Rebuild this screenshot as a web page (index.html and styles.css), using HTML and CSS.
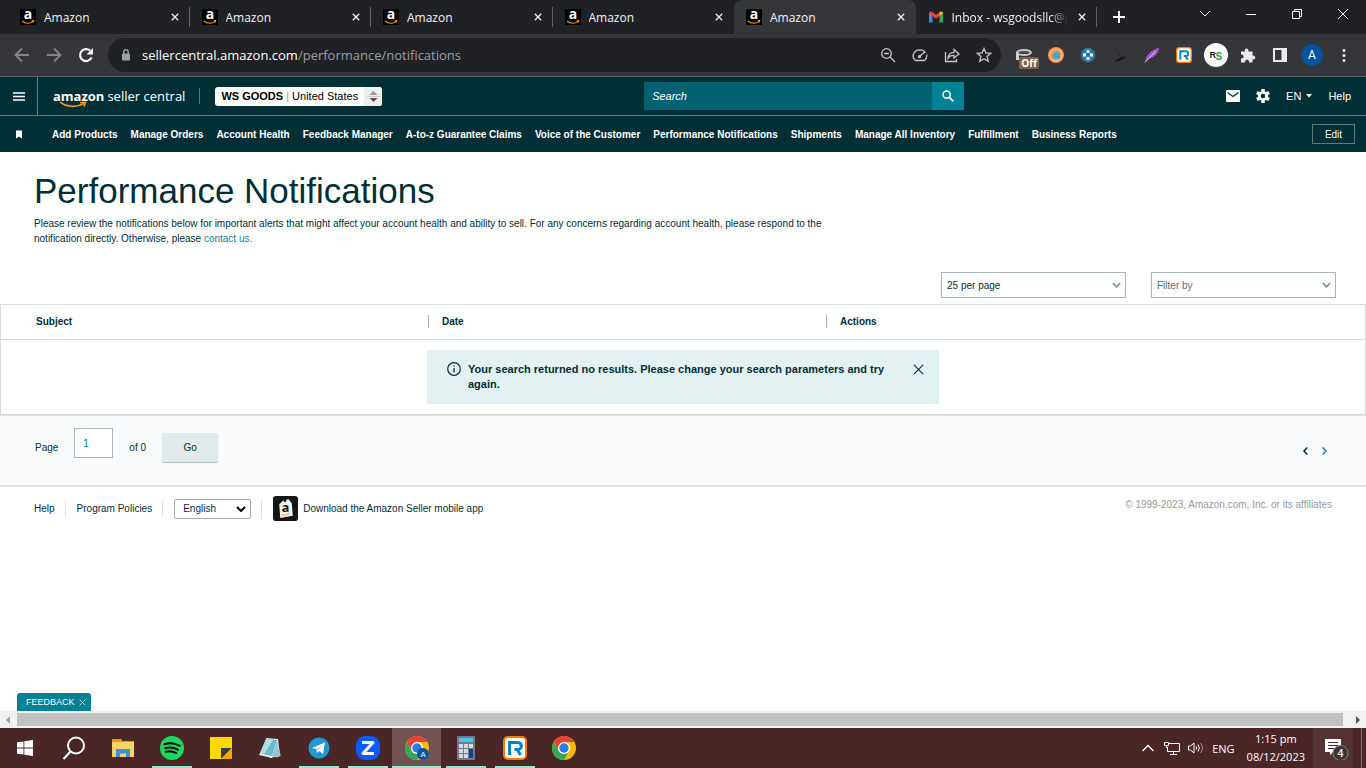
FILE: index.html
```html
<!DOCTYPE html>
<html lang="en">
<head>
<meta charset="UTF-8" />
<meta name="viewport" content="width=device-width, initial-scale=1" />
<title>Amazon</title>
<link rel="stylesheet" href="styles.css">
</head>
<body>

<!-- shared icons -->
<svg class="sprite" aria-hidden="true">
  <symbol id="i-amazon" viewBox="0 0 16 16">
    <rect width="16" height="16" fill="#000"/>
    <text x="8" y="10" text-anchor="middle" font-family="Open Sans, sans-serif" font-weight="700" font-size="14" fill="#fff">a</text>
    <path d="M2 12c3.5 2.800 8 2.800 11 .4M11.600 12l2-.4-.3 1.800" fill="none" stroke="#f90" stroke-width="1.2"/>
  </symbol>
  <symbol id="i-close" viewBox="0 0 10 10">
    <path d="M1 1l8 8M9 1l-8 8" fill="none" stroke="currentColor" stroke-width="1.6"/>
  </symbol>
  <symbol id="i-thin-close" viewBox="0 0 12 12">
    <path d="M1 1l10 10M11 1L1 11" fill="none" stroke="currentColor" stroke-width="1.2"/>
  </symbol>
  <symbol id="i-down" viewBox="0 0 10 6">
    <path d="M1 1l4 4 4-4" fill="none" stroke="currentColor" stroke-width="2"/>
  </symbol>
  <symbol id="i-r" viewBox="0 0 24 24">
    <rect width="24" height="24" rx="5" fill="#ff7a00"/>
    <rect x="2" y="2" width="20" height="20" rx="3" fill="#fff"/>
    <path d="M6.500 19V6.500h8c5 0 5 7 .5 7h-3.500M14 13l3.500 6" fill="none" stroke="#0684bd" stroke-width="3"/>
  </symbol>
  <symbol id="i-chrome" viewBox="0 0 24 24">
    <circle cx="12" cy="12" r="12" fill="#fbbc05"/>
    <path d="M12 6h10.400A12 12 0 0 0 1.600 6L7 15z" fill="#ea4335"/>
    <path d="M1.600 6A12 12 0 0 0 12 24l5-9H7z" fill="#34a853"/>
    <circle cx="12" cy="12" r="6" fill="#fff"/>
    <circle cx="12" cy="12" r="4.700" fill="#3478e5"/>
  </symbol>
</svg>

<!-- browser tabs -->
<div class="tabstrip">
  <div class="tabs">
    <div class="tab"><svg class="favicon"><use href="#i-amazon"/></svg><span class="tab-title">Amazon</span><button class="tab-close" aria-label="Close tab"><svg><use href="#i-close"/></svg></button></div>
    <div class="tab"><svg class="favicon"><use href="#i-amazon"/></svg><span class="tab-title">Amazon</span><button class="tab-close" aria-label="Close tab"><svg><use href="#i-close"/></svg></button></div>
    <div class="tab"><svg class="favicon"><use href="#i-amazon"/></svg><span class="tab-title">Amazon</span><button class="tab-close" aria-label="Close tab"><svg><use href="#i-close"/></svg></button></div>
    <div class="tab before-active"><svg class="favicon"><use href="#i-amazon"/></svg><span class="tab-title">Amazon</span><button class="tab-close" aria-label="Close tab"><svg><use href="#i-close"/></svg></button></div>
    <div class="tab active"><svg class="favicon"><use href="#i-amazon"/></svg><span class="tab-title">Amazon</span><button class="tab-close" aria-label="Close tab"><svg><use href="#i-close"/></svg></button></div>
    <div class="tab"><svg class="favicon" viewBox="0 0 16 16"><path d="M1 13.500V4l3.500 2.500v7z" fill="#4285f4"/><path d="M11.500 6.500L15 4v9.500h-3.500z" fill="#34a853"/><path d="M1 4.500C1 2.600 3 2 4.300 3L8 5.800 11.700 3v4L8 9.800 1 4.600z" fill="#ea4335"/><path d="M11.500 3.100C13 2 15 2.600 15 4.500L11.500 7z" fill="#fbbc04"/></svg><span class="tab-title fade">Inbox - wsgoodsllc@g</span><button class="tab-close" aria-label="Close tab"><svg><use href="#i-close"/></svg></button></div>
  </div>
  <button class="new-tab" aria-label="New tab"><svg viewBox="0 0 12 12"><path d="M6 0v12M0 6h12" stroke="#fff" stroke-width="2"/></svg></button>
  <div class="window-buttons">
    <button aria-label="Search tabs"><svg viewBox="0 0 12 12"><path d="M1 3l5 5 5-5" fill="none" stroke="#fff"/></svg></button>
    <button aria-label="Minimize"><svg viewBox="0 0 12 12"><path d="M1 6.500h10" stroke="#fff"/></svg></button>
    <button aria-label="Restore"><svg viewBox="0 0 12 12"><path d="M1.500 3.500h7v7h-7zM3.500 3.500v-2h7v7h-2" fill="none" stroke="#fff"/></svg></button>
    <button aria-label="Close"><svg viewBox="0 0 12 12"><path d="M1 1l10 10M11 1L1 11" fill="none" stroke="#fff"/></svg></button>
  </div>
</div>

<!-- browser toolbar -->
<div class="toolbar">
  <div class="nav-buttons">
    <button aria-label="Back" class="dim"><svg viewBox="0 0 16 16"><path d="M15 8H2M8 1.500L1.500 8 8 14.500" fill="none" stroke="currentColor" stroke-width="1.8"/></svg></button>
    <button aria-label="Forward" class="dim"><svg viewBox="0 0 16 16"><path d="M1 8h13M8 1.500L14.500 8 8 14.500" fill="none" stroke="currentColor" stroke-width="1.8"/></svg></button>
    <button aria-label="Reload"><svg viewBox="0 0 16 16"><path d="M13.600 10.500A6 6 0 1 1 12.300 3.800" fill="none" stroke="currentColor" stroke-width="2.2"/><path d="M15 1v6.500H8.500z" fill="currentColor"/></svg></button>
  </div>
  <div class="omnibox">
    <svg class="lock" viewBox="0 0 10 12"><rect x="1" y="4.500" width="8" height="7" rx="1" fill="#9aa0a6"/><path d="M2.800 5V3a2.200 2.200 0 0 1 4.400 0v2" fill="none" stroke="#9aa0a6" stroke-width="1.4"/></svg>
    <span class="url"><b>sellercentral.amazon.com</b>/performance/notifications</span>
    <button aria-label="Zoom"><svg viewBox="0 0 16 16"><circle cx="6.500" cy="6.500" r="4.800"/><path d="M10 10l5 5M4.200 6.500h4.600"/></svg></button>
    <button aria-label="Performance"><svg viewBox="0 0 16 16"><path d="M3.500 13.500C-1 10.500 1 3 8 2.800c3 0 4.500 1.200 5.500 2.700M14.800 7.500c.3 2.500-.8 4.800-2.300 6h-9"/><path d="M7 9.800l6-5"/><circle cx="7.500" cy="9.600" r="1"/></svg></button>
    <button aria-label="Share"><svg viewBox="0 0 16 16"><path d="M1.500 5v9.500h11V12"/><path d="M4 11c.5-4 2.500-5.600 6-5.700V2.500L15 7l-5 4V8.300C7.500 8.200 5.500 9 4 11z"/></svg></button>
    <button aria-label="Bookmark"><svg viewBox="0 0 16 16"><path d="M8 1.500l1.900 4.400 4.800.4-3.600 3.200 1.100 4.800L8 11.800l-4.200 2.500 1.100-4.800L1.300 6.300l4.800-.4z"/></svg></button>
  </div>
  <div class="extensions">
    <button aria-label="Extension off"><svg class="big" viewBox="0 0 24 24"><path d="M5.500 9v8" stroke="#d6d6d6" stroke-width="3"/><ellipse cx="12" cy="9.500" rx="8" ry="3.500" fill="#c7c8ca"/><ellipse cx="12" cy="9.500" rx="5.500" ry="1.500" fill="#444"/></svg><span class="off">Off</span></button>
    <button aria-label="Extension"><svg viewBox="0 0 16 16"><circle cx="8" cy="8" r="8" fill="#fb9148"/><circle cx="8" cy="8" r="6" fill="none" stroke="#ffd0a5"/><circle cx="8.500" cy="8.500" r="3.600" fill="#2baee8"/></svg></button>
    <button aria-label="Extension"><svg viewBox="0 0 16 16"><circle cx="8" cy="8" r="7.200" fill="#2476ab"/><path d="M6.500 3h3v3h-3zM6.500 10h3v3h-3zM3 6.500h3v3H3zM10 6.500h3v3h-3z" fill="#fff"/></svg></button>
    <button aria-label="Extension"><svg viewBox="0 0 16 16"><path d="M4 2l5 9" stroke="#232427"/><path d="M4 14l9-4" stroke="#111" stroke-width="1.5"/></svg></button>
    <button aria-label="Extension"><svg viewBox="0 0 16 16"><path d="M1 15C2 7 8 3 15 .5c.5 4-3 9.500-11 11.500z" fill="#a254d8"/><path d="M1 15.500L12 4" stroke="#e6c8f5"/></svg></button>
    <button aria-label="Extension"><svg><use href="#i-r"/></svg></button>
    <button aria-label="Extension"><svg class="big" viewBox="0 0 24 24"><circle cx="12" cy="12" r="12" fill="#fff"/><text x="5.500" y="14.500" font-family="Liberation Sans" font-weight="700" font-size="9" fill="#222">R</text><text x="11.500" y="17" font-family="Liberation Sans" font-weight="700" font-size="10" fill="#16a34a">S</text></svg></button>
    <button aria-label="Extensions"><svg viewBox="0 0 16 16"><path d="M1 4.500h4C4 .5 9 .5 8.500 4.500h4v4c3.800-.5 3.800 4.500 0 4v3H9c.3-4-4.300-4-4 0H1v-4c3.500.3 3.500-4.300 0-4z" fill="#e8eaed"/></svg></button>
    <button aria-label="Side panel"><svg viewBox="0 0 16 16"><path d="M2 2h12v12H2z" fill="none" stroke="#e8eaed" stroke-width="2"/><path d="M9.500 2H14v12H9.500z" fill="#e8eaed"/></svg></button>
    <button aria-label="Profile"><span class="avatar">A</span></button>
    <button aria-label="Menu"><svg viewBox="0 0 16 16"><g fill="#e8eaed"><circle cx="8" cy="3.500" r="1.500"/><circle cx="8" cy="8.500" r="1.500"/><circle cx="8" cy="13.500" r="1.500"/></g></svg></button>
  </div>
</div>

<!-- seller central header -->
<header class="header">
  <button class="menu" aria-label="Menu"><svg viewBox="0 0 12 9"><path d="M0 1h12M0 4.500h12M0 8h12" stroke="#fff" stroke-width="1.5"/></svg></button>
  <a class="logo" href="#"><span class="logo-amazon">amazon<svg viewBox="0 0 28 7"><path d="M1 1c7 5.500 17 5.500 24 1.500M21 1.500h5.500L25 5.500" fill="none" stroke="#f7981d" stroke-width="1.6"/></svg></span><span>seller central</span></a>
  <button class="account"><span class="store"><b>WS GOODS</b> <i>|</i> United States</span><span class="stepper"><svg viewBox="0 0 13 13"><path d="M2.500 5l4-4 4 4z" fill="#999"/><path d="M0 6.500h13" stroke="#ccc"/><path d="M2.500 8l4 4 4-4z" fill="#555"/></svg></span></button>
  <form class="search">
    <input type="search" placeholder="Search" aria-label="Search">
    <button aria-label="Search"><svg viewBox="0 0 12 12"><circle cx="4.600" cy="4.600" r="3.600" fill="none" stroke="#fff" stroke-width="1.5"/><path d="M7.200 7.200l4.200 4.200" stroke="#fff" stroke-width="1.8"/></svg></button>
  </form>
  <div class="header-links">
    <a href="#" aria-label="Messages"><svg viewBox="0 0 14 14"><rect y="1" width="14" height="12" rx="1" fill="#fff"/><path d="M1.500 3.500L7 7.500l5.500-4" fill="none" stroke="#002f36" stroke-width="1.3"/></svg></a>
    <a href="#" aria-label="Settings"><svg viewBox="0 0 14 14"><circle cx="7" cy="7" r="5" fill="#fff"/><path d="M7 0v14M.9 3.500l12.200 7M.9 10.500l12.200-7" stroke="#fff" stroke-width="3.5"/><circle cx="7" cy="7" r="2.300" fill="#002f36"/></svg></a>
    <button class="lang">EN<svg viewBox="0 0 6 4"><path d="M0 0h6L3 3.500z" fill="#fff"/></svg></button>
    <a href="#">Help</a>
  </div>
</header>

<nav class="shortcuts">
  <svg class="bookmark" viewBox="0 0 6 8"><path d="M0 0h6v8L3 6 0 8z" fill="#fff"/></svg>
  <a href="#">Add Products</a>
  <a href="#">Manage Orders</a>
  <a href="#">Account Health</a>
  <a href="#">Feedback Manager</a>
  <a href="#">A-to-z Guarantee Claims</a>
  <a href="#">Voice of the Customer</a>
  <a href="#">Performance Notifications</a>
  <a href="#">Shipments</a>
  <a href="#">Manage All Inventory</a>
  <a href="#">Fulfillment</a>
  <a href="#">Business Reports</a>
  <button class="edit">Edit</button>
</nav>

<main class="page">
  <section class="intro">
    <h1>Performance Notifications</h1>
    <p>Please review the notifications below for important alerts that might affect your account health and ability to sell. For any concerns regarding account health, please respond to the notification directly. Otherwise, please <a href="#">contact us.</a></p>
  </section>

  <div class="filters">
    <label class="dropdown"><select aria-label="Results per page"><option>25 per page</option></select><svg><use href="#i-down"/></svg></label>
    <label class="dropdown muted"><select aria-label="Filter by"><option>Filter by</option></select><svg><use href="#i-down"/></svg></label>
  </div>

  <table class="results">
    <thead>
      <tr><th class="subject">Subject</th><th class="date"><span>Date</span></th><th><span>Actions</span></th></tr>
    </thead>
    <tbody>
      <tr><td colspan="3">
        <div class="alert" role="status">
          <svg class="info" viewBox="0 0 14 14"><circle cx="7" cy="7" r="6.300" fill="none" stroke="#002f36" stroke-width="1.2"/><path d="M7 6v4.500M7 3.500v1.300" stroke="#002f36" stroke-width="1.3"/></svg>
          <p>Your search returned no results. Please change your search parameters and try again.</p>
          <button aria-label="Dismiss"><svg><use href="#i-thin-close"/></svg></button>
        </div>
      </td></tr>
    </tbody>
  </table>

  <div class="pagination">
    <label for="page-number">Page</label>
    <input id="page-number" type="text" value="1">
    <span>of 0</span>
    <button class="go">Go</button>
    <div class="arrows">
      <button aria-label="Previous page"><svg viewBox="0 0 5 8"><path d="M4.300.5L1 4l3.300 3.500" fill="none" stroke="#002f36" stroke-width="1.5"/></svg></button>
      <button aria-label="Next page"><svg viewBox="0 0 5 8"><path d="M.7.5L4 4 .7 7.500" fill="none" stroke="#1a7f9c" stroke-width="1.5"/></svg></button>
    </div>
  </div>

  <footer class="footer">
    <a href="#">Help</a>
    <a href="#">Program Policies</a>
    <div class="language"><label class="dropdown"><select aria-label="Language"><option>English</option></select><svg><use href="#i-down"/></svg></label></div>
    <a class="app" href="#"><svg viewBox="0 0 24 24"><rect width="24" height="24" rx="3" fill="#151515"/><path d="M6 8l4-4 5-1 3 4 1 12-12 2z" fill="#f3f3f3"/><circle cx="11.500" cy="4.500" r="1.300" fill="#151515"/><text x="12" y="15.500" text-anchor="middle" font-family="Open Sans, sans-serif" font-weight="700" font-size="12" fill="#111">a</text><path d="M8.500 17.500c2 1.300 5 1 7.500-.8" fill="none" stroke="#f5a33a"/></svg>Download the Amazon Seller mobile app</a>
    <small>© 1999-2023, Amazon.com, Inc. or its affiliates</small>
  </footer>

  <button class="feedback">FEEDBACK<svg><use href="#i-thin-close"/></svg></button>
</main>

<div class="scrollbar">
  <svg viewBox="0 0 4 8"><path d="M4 0v8L0 4z" fill="#a3a3a3"/></svg>
  <div class="thumb"></div>
  <svg viewBox="0 0 4 8"><path d="M0 0v8l4-4z" fill="#505050"/></svg>
</div>

<!-- windows taskbar -->
<div class="taskbar">
  <button aria-label="Start"><svg class="small" viewBox="0 0 16 16"><path d="M0 2.300l6.500-.9v6.200H0zM7.300 1.300L16 0v7.600H7.300zM0 8.400h6.500v6.200L0 13.700zM7.300 8.400H16V16l-8.700-1.300z" fill="#fff"/></svg></button>
  <button aria-label="Search"><svg viewBox="0 0 24 24"><circle cx="14" cy="9.500" r="8" fill="none" stroke="#fff" stroke-width="2"/><path d="M8.500 15.500L1.500 23" stroke="#fff" stroke-width="2.2"/></svg></button>
  <button aria-label="File Explorer"><svg viewBox="0 0 24 24"><path d="M1 3h9l1.500 2H23v16H1z" fill="#e19b10"/><path d="M1 6h22v15H1z" fill="#fdd264"/><path d="M5 13h14v8h-4v-3.500H9V21H5z" fill="#3b8ee0"/></svg></button>
  <button aria-label="Spotify" class="open"><svg viewBox="0 0 24 24"><circle cx="12" cy="12" r="12" fill="#1ed760"/><path d="M4.500 8.200c5-1.500 10.500-1 15 1.500M5.200 12.200c4.200-1.300 8.800-.7 12.500 1.500M5.800 15.800c3.700-1 7.200-.6 10.300 1.200" fill="none" stroke="#000" stroke-width="2" stroke-linecap="round"/></svg></button>
  <button aria-label="Sticky Notes"><svg viewBox="0 0 24 24"><path d="M1 1h22v22H1z" fill="#ffd800"/><path d="M12 23V12h11z" fill="#3a3a3a"/><path d="M12 23l11-11v11z" fill="#f0ad00"/></svg></button>
  <button aria-label="Notepad"><svg viewBox="0 0 24 24"><path d="M19 4l4 16-5 2z" fill="#a77b36"/><path d="M8 2l12 1 2 17-10 2z" fill="#e0eef2"/><path d="M8 3l11 1-5 16L2 17z" fill="#69b9cf"/><path d="M8 3l7 1-9 14-4-1z" fill="#b3dce6"/><path d="M2 17l12 3v2L1 19z" fill="#eee"/><path d="M19 4l3 16-8 1z" fill="#8fcadb"/></svg></button>
  <button aria-label="Telegram" class="open"><svg viewBox="0 0 24 24"><circle cx="12" cy="12" r="10.500" fill="#1d9ad6"/><path d="M5 12l13-5.500-2 11.500-4-3-2 2-.7-4z" fill="#fff"/><path d="M9.500 13.500L16 8.500l-5.500 6z" fill="#9bc7df"/></svg></button>
  <button aria-label="Zoom" class="open"><svg viewBox="0 0 24 24"><rect width="24" height="24" rx="9" fill="#0b5cff"/><path d="M6 6.500h11L7 17.500h11" fill="none" stroke="#fff" stroke-width="3" stroke-linejoin="round"/></svg></button>
  <button aria-label="Chrome" class="open current"><svg viewBox="0 0 24 24"><use href="#i-chrome" width="24" height="24"/><circle cx="18" cy="18" r="6" fill="#0b569c"/><text x="18" y="21" text-anchor="middle" font-family="Roboto, sans-serif" font-size="8" fill="#fff">A</text></svg></button>
  <button aria-label="Calculator" class="open"><svg viewBox="0 0 24 24"><rect x="3" width="18" height="24" rx="1" fill="#737b87"/><path d="M5 2h14v4H5z" fill="#43c9f2"/><path d="M5 8h4v4H5zM10 8h4v4h-4zM15 8h4v4h-4zM5 13h4v4H5zM10 13h4v4h-4zM5 18h4v4H5zM10 18h4v4h-4z" fill="#d4dae1"/><path d="M15 13h4v9h-4z" fill="#143f87"/></svg></button>
  <button aria-label="RingCentral" class="open"><svg><use href="#i-r"/></svg></button>
  <button aria-label="Chrome"><svg><use href="#i-chrome"/></svg></button>

  <div class="tray">
    <svg viewBox="0 0 16 16"><path d="M2.500 11L8 5.500l5.500 5.500" fill="none" stroke="#fff" stroke-width="1.3"/></svg>
    <svg viewBox="0 0 16 16"><path d="M5 3.500h10.500v8H3.500V7M9.500 11.500v3M6 14.500h7M.5 2.500h4v3h-4zM2.500 5.500v2h1" fill="none" stroke="#fff"/></svg>
    <svg viewBox="0 0 16 16"><path d="M.5 6h2L6 3v10L2.500 10h-2zM8 6.300q1.300 1.700 0 3.400M10 4.500q2.600 3.500 0 7" fill="none" stroke="#fff"/><path d="M12.500 3q4 5 0 10" fill="none" stroke="#a58e8e"/></svg>
    <span>ENG</span>
    <div class="clock"><span>1:15 pm</span><span>08/12/2023</span></div>
    <button class="notices" aria-label="4 notifications"><svg viewBox="0 0 24 24"><path d="M0 3h16v13H8l-3 3v-3H0z" fill="#fff"/><path d="M3 6.500h10M3 9.500h10M3 12.500h6" stroke="#4b2627"/><circle cx="15.500" cy="17" r="7.500" fill="#3b3435" stroke="#8c8081"/><text x="15.500" y="21" text-anchor="middle" font-family="Open Sans, sans-serif" font-weight="600" font-size="11" fill="#fff">4</text></svg></button>
  </div>
</div>

</body>
</html>
```
FILE: styles.css
```css
* {
  box-sizing: border-box;
}

body {
  margin: 0;
  min-height: 100vh;
  display: flex;
  flex-direction: column;
  background: #fff;
  color: #002f36;
  font-family: "Liberation Sans", Arial, sans-serif;
  font-size: 10px;
}

a {
  color: inherit;
  text-decoration: none;
}

button {
  padding: 0;
  border: 0;
  background: none;
  color: inherit;
  font: inherit;
}

svg {
  display: block;
  flex: none;
}

.sprite {
  position: absolute;
  width: 0;
  height: 0;
}

/* Tabs */
.tabstrip {
  display: flex;
  height: 34px;
  padding-left: 8px;
  background: #202124;
  color: #f1f3f4;
  font-family: "Open Sans", sans-serif;
  font-size: 12px;
}

.tabs {
  display: flex;
  flex: 0 1 1089px;
}

.tab {
  display: flex;
  flex: 1;
  min-width: 0;
  align-items: center;
  padding: 0 11px 0 12px;
  background: linear-gradient(#5f6368, #5f6368) right center / 1px 20px no-repeat;
}

.tab.before-active {
  background: none;
}

.tab.active {
  background: #35363a;
  border-radius: 8px 8px 0 0;
}

.favicon {
  width: 16px;
  height: 16px;
  margin-right: 8px;
}

.tab-title {
  flex: 1;
  overflow: hidden;
  white-space: nowrap;
}

.tab-title.fade {
  margin-right: 10px;
  -webkit-mask-image: linear-gradient(90deg, #000 85%, transparent);
  mask-image: linear-gradient(90deg, #000 85%, transparent);
}

.tab-close svg {
  width: 8px;
  height: 8px;
}

.new-tab {
  width: 44px;
  display: grid;
  place-items: center;
}

.new-tab svg,
.window-buttons svg {
  width: 12px;
  height: 12px;
}

.window-buttons {
  display: flex;
  margin-left: auto;
  height: 28px;
}

.window-buttons button {
  width: 46px;
  display: grid;
  place-items: center;
}

/* Address bar */
.toolbar {
  display: flex;
  align-items: center;
  height: 43px;
  padding-left: 6px;
  background: #35363a;
  border-bottom: 1px solid #5f6368;
  color: #f1f3f4;
}

.nav-buttons,
.extensions {
  display: flex;
}

.toolbar button {
  position: relative;
  display: grid;
  place-items: center;
  width: 32px;
  height: 34px;
}

.toolbar svg {
  width: 16px;
  height: 16px;
}

.toolbar .dim {
  color: #85878a;
}

.omnibox {
  display: flex;
  flex: 1;
  align-items: center;
  height: 34px;
  margin: 0 7px 0 6px;
  padding: 0 1px 0 13px;
  border-radius: 17px;
  background: #202124;
  font-family: "Open Sans", sans-serif;
  font-size: 13px;
}

.omnibox button svg {
  fill: none;
  stroke: #c4c7ca;
  stroke-width: 1.3;
}

.toolbar .lock {
  width: 10px;
  height: 12px;
  margin-right: 11px;
}

.url {
  flex: 1;
  color: #9aa0a6;
}

.url b {
  color: #fff;
  font-weight: 400;
}

.toolbar .big {
  width: 24px;
  height: 24px;
}

.extensions {
  padding-right: 6px;
}

.off {
  position: absolute;
  right: 1px;
  bottom: 3px;
  padding: 0 2px;
  border-radius: 2px;
  background: #7d6347;
  color: #fff;
  font: bold 10px/12px "Open Sans", sans-serif;
}

.avatar {
  width: 22px;
  border-radius: 50%;
  background: #00539c;
  color: #fff;
  font: 12px/22px Roboto, sans-serif;
}

/* Seller Central header */
.header {
  display: flex;
  align-items: center;
  height: 39px;
  padding-right: 15px;
  background: #002f36;
  border-bottom: 1px solid #5f7a7e;
  color: #fff;
  font-size: 11px;
}

.menu {
  display: grid;
  place-items: center;
  align-self: stretch;
  width: 38px;
  border-right: 1px solid #5f7a7e;
}

.menu svg {
  width: 12px;
  height: 9px;
}

.logo {
  display: flex;
  gap: 3px;
  margin-left: 15px;
  padding-right: 14px;
  border-right: 1px solid #5f7a7e;
  font: 400 13px/16px "Open Sans", sans-serif;
}

.logo-amazon {
  position: relative;
  font-weight: 700;
}

.logo-amazon svg {
  position: absolute;
  left: 6px;
  bottom: -4px;
  width: 28px;
  height: 7px;
}

.account {
  display: flex;
  align-items: center;
  height: 19px;
  margin-left: 15px;
  border-radius: 3px;
  background: #fff;
  color: #000;
}

.store {
  padding: 0 6px;
}

.store i {
  color: #c98a3c;
  font-style: normal;
}

.stepper {
  display: grid;
  place-items: center;
  align-self: stretch;
  width: 18px;
  border-radius: 0 3px 3px 0;
  background: #eee;
}

.stepper svg {
  width: 13px;
  height: 13px;
}

.search {
  display: flex;
  flex: 0 1 320px;
  height: 28px;
  margin: 0 auto;
}

.search input {
  flex: 1;
  min-width: 0;
  padding: 0 8px;
  border: 0;
  background: #006170;
  color: #fff;
  font: inherit;
}

.search input::placeholder {
  color: #fff;
  font-style: italic;
}

.search button {
  display: grid;
  place-items: center;
  width: 32px;
  background: #008296;
}

.search svg {
  width: 12px;
  height: 12px;
}

.header-links {
  display: flex;
  align-items: center;
  gap: 16px;
}

.header-links a svg {
  width: 14px;
  height: 14px;
}

.lang {
  display: flex;
  align-items: center;
  gap: 5px;
}

.lang svg {
  width: 6px;
  height: 4px;
}

.shortcuts {
  display: flex;
  align-items: center;
  gap: 13px;
  height: 36px;
  padding: 0 11px 0 16px;
  background: #002f36;
  color: #fff;
  font-weight: 700;
  white-space: nowrap;
}

.bookmark {
  width: 6px;
  height: 9px;
  margin-right: 17px;
}

.edit {
  width: 43px;
  height: 20px;
  margin-left: auto;
  border: 1px solid #5f7a7e;
  font-weight: 400;
}

/* Page */
.page {
  display: flex;
  flex: 1;
  flex-direction: column;
}

.intro {
  max-width: 900px;
  padding: 18px 34px 0;
}

h1 {
  margin: 0 0 4px;
  font-size: 35px;
  font-weight: 400;
  line-height: 42px;
}

.intro p {
  margin: 0;
  line-height: 15px;
}

.intro p a {
  color: #1a7f9c;
}

.filters {
  display: flex;
  justify-content: flex-end;
  gap: 25px;
  padding: 26px 30px 6px;
}

.dropdown {
  display: grid;
  align-items: center;
  width: 185px;
}

.dropdown select,
.dropdown svg {
  grid-area: 1 / 1;
}

.dropdown select {
  height: 26px;
  padding: 0 5px;
  border: 1px solid #a6b5b5;
  border-radius: 0;
  appearance: none;
  background: #fff;
  color: inherit;
  font: inherit;
}

.dropdown svg {
  justify-self: end;
  width: 9px;
  height: 6px;
  margin-right: 5px;
  color: #879596;
  pointer-events: none;
}

.dropdown.muted select {
  color: #5a6c6e;
}

.results {
  width: 100%;
  border: 1px solid #d5dbdb;
  border-spacing: 0;
}

.results th {
  height: 35px;
  padding: 0 0 2px;
  border-bottom: 1px solid #d5dbdb;
  text-align: left;
}

.results .subject {
  width: 427px;
  padding-left: 35px;
}

.results .date {
  width: 398px;
}

.results th span {
  display: block;
  padding-left: 13px;
  border-left: 1px solid #a6b5b5;
  line-height: 13px;
}

.results td {
  padding: 10px;
}

.alert {
  display: flex;
  align-items: flex-start;
  max-width: 512px;
  margin: 0 auto;
  padding: 12px 15px 12px 20px;
  background: #e3f1f2;
  font-size: 11px;
  font-weight: 700;
  line-height: 15px;
}

.alert p {
  flex: 1;
  margin: 0 8px 0 7px;
}

.alert .info {
  width: 14px;
  height: 14px;
}

.alert button svg {
  width: 11px;
  height: 15px;
}

.pagination {
  display: flex;
  align-items: center;
  gap: 16px;
  height: 72px;
  padding: 0 39px 7px 35px;
  background: #f9fafb;
  border-top: 1px solid #e1e4e5;
  border-bottom: 2px solid #e1e4e5;
}

.pagination input {
  width: 39px;
  height: 30px;
  margin-bottom: 8px;
  padding: 0 8px;
  border: 1px solid #a6b5b5;
  background: #fff;
  color: #00748a;
  font: inherit;
}

.go {
  width: 56px;
  height: 29px;
  border-radius: 2px;
  background: #e2ebeb;
  box-shadow: 0 1px 1px #b5bdbd;
}

.arrows {
  display: flex;
  gap: 14px;
  margin: 8px 0 0 auto;
}

.arrows svg {
  width: 5px;
  height: 8px;
}

.footer {
  display: flex;
  align-items: center;
  padding: 9px 34px;
}

.footer > a,
.language {
  margin-right: 11px;
}

.footer > a:not(.app),
.language {
  padding-right: 10px;
  border-right: 1px solid #dde1e1;
  line-height: 16px;
}

.footer .dropdown {
  width: 77px;
}

.footer select {
  height: 20px;
  padding: 0 8px;
  border-color: #aaa;
  border-radius: 2px;
}

.footer .dropdown svg {
  color: #000;
  width: 10px;
}

.app {
  display: flex;
  align-items: center;
  gap: 5px;
}

.app svg {
  width: 25px;
  height: 25px;
}

.footer small {
  align-self: flex-start;
  margin-left: auto;
  color: #999;
  font-size: 10px;
  line-height: 18px;
}

.feedback {
  display: flex;
  align-items: center;
  gap: 4px;
  align-self: flex-start;
  height: 18px;
  margin: auto 0 0 17px;
  padding: 0 5px 0 9px;
  border-radius: 3px 3px 0 0;
  background: #008296;
  color: #fff;
  font-size: 9px;
}

.feedback svg {
  width: 7px;
  height: 7px;
}

.scrollbar {
  display: flex;
  align-items: center;
  gap: 7px;
  height: 17px;
  padding: 0 6px;
  background: #f1f1f1;
}

.scrollbar svg {
  width: 4px;
  height: 8px;
}

.thumb {
  flex: 1;
  height: 13px;
  margin-right: 6px;
  background: #c1c1c1;
}

/* Taskbar */
.taskbar {
  display: flex;
  height: 40px;
  background: #4b2627;
  color: #fff;
  font-family: "Open Sans", sans-serif;
  font-size: 11px;
}

.taskbar > button {
  display: grid;
  place-items: center;
  width: 49px;
}

.taskbar > button svg {
  width: 24px;
  height: 24px;
}

.taskbar > button .small {
  width: 16px;
  height: 16px;
}

.taskbar .open {
  background: linear-gradient(#93e6d8, #93e6d8) center bottom / 40px 2px no-repeat;
}

.taskbar .current {
  background-color: #745354;
  background-size: 100% 2px;
}

.tray {
  display: flex;
  align-items: center;
  gap: 8px;
  margin-left: auto;
  padding-right: 8px;
  border-right: 1px solid #8b7374;
  margin-right: 4px;
}

.tray > svg {
  width: 16px;
  height: 16px;
}

.clock {
  display: flex;
  flex-direction: column;
  align-items: center;
  margin-left: 4px;
  line-height: 18px;
}

.notices {
  display: grid;
  place-items: center end;
  align-self: stretch;
  width: 40px;
  padding-right: 4px;
  background: #553233;
}

.notices svg {
  width: 24px;
  height: 24px;
}
```
